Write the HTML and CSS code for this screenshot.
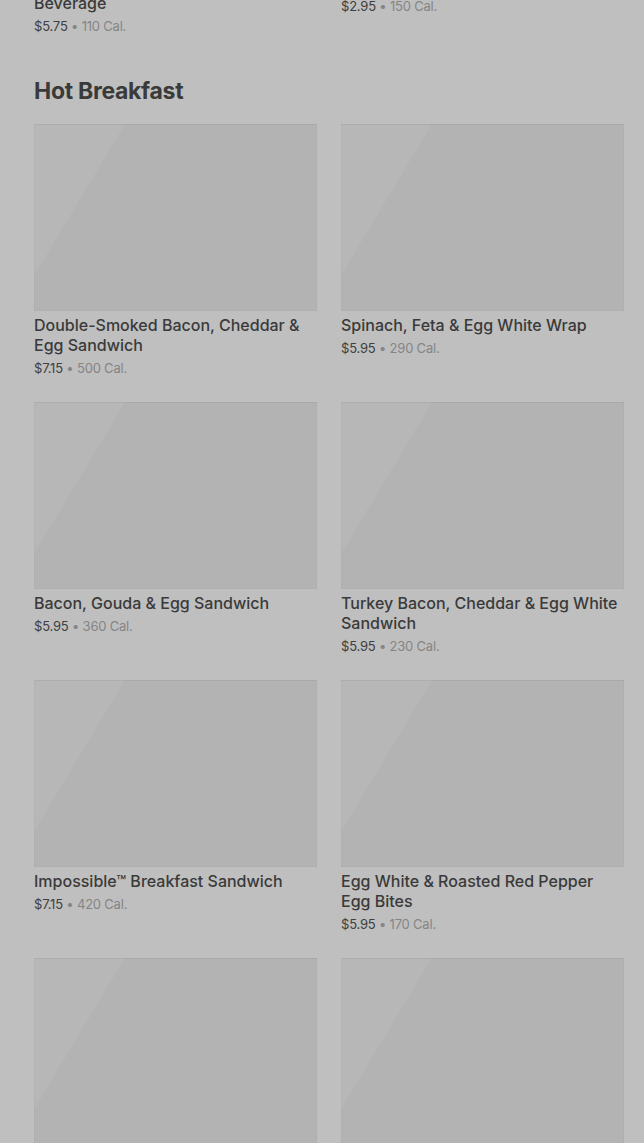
FILE: index.html
```html
<!DOCTYPE html>
<html lang="en">
<head>
<meta charset="utf-8">
<title>Menu</title>
<link rel="stylesheet" href="styles.css">
</head>
<body>
<main class="menu">
  <section class="section section-prev">
    <div class="grid">
      <article class="card">
        <div class="thumb"></div>
        <h3 class="name">Iced Brown Sugar Oatmilk<br>Beverage</h3>
        <p class="meta"><span class="price">$5.75</span> <span class="cal">• 110 Cal.</span></p>
      </article>
      <article class="card">
        <div class="thumb"></div>
        <h3 class="name">Hot Chocolate</h3>
        <p class="meta"><span class="price">$2.95</span> <span class="cal">• 150 Cal.</span></p>
      </article>
    </div>
  </section>

  <section class="section">
    <h2 class="heading">Hot Breakfast</h2>
    <div class="grid">
      <article class="card">
        <div class="thumb"></div>
        <h3 class="name">Double-Smoked Bacon, Cheddar &amp; Egg Sandwich</h3>
        <p class="meta"><span class="price">$7.15</span> <span class="cal">• 500 Cal.</span></p>
      </article>
      <article class="card">
        <div class="thumb"></div>
        <h3 class="name">Spinach, Feta &amp; Egg White Wrap</h3>
        <p class="meta"><span class="price">$5.95</span> <span class="cal">• 290 Cal.</span></p>
      </article>
      <article class="card">
        <div class="thumb"></div>
        <h3 class="name">Bacon, Gouda &amp; Egg Sandwich</h3>
        <p class="meta"><span class="price">$5.95</span> <span class="cal">• 360 Cal.</span></p>
      </article>
      <article class="card">
        <div class="thumb"></div>
        <h3 class="name">Turkey Bacon, Cheddar &amp; Egg White Sandwich</h3>
        <p class="meta"><span class="price">$5.95</span> <span class="cal">• 230 Cal.</span></p>
      </article>
      <article class="card">
        <div class="thumb"></div>
        <h3 class="name">Impossible™ Breakfast Sandwich</h3>
        <p class="meta"><span class="price">$7.15</span> <span class="cal">• 420 Cal.</span></p>
      </article>
      <article class="card">
        <div class="thumb"></div>
        <h3 class="name">Egg White &amp; Roasted Red Pepper Egg Bites</h3>
        <p class="meta"><span class="price">$5.95</span> <span class="cal">• 170 Cal.</span></p>
      </article>
      <article class="card">
        <div class="thumb"></div>
        <h3 class="name">Potato, Cheddar &amp; Chive Bakes</h3>
        <p class="meta"><span class="price">$4.25</span> <span class="cal">• 420 Cal.</span></p>
      </article>
      <article class="card">
        <div class="thumb"></div>
        <h3 class="name">Kale &amp; Mushroom Egg Bites</h3>
        <p class="meta"><span class="price">$5.95</span> <span class="cal">• 230 Cal.</span></p>
      </article>
    </div>
  </section>
</main>
</body>
</html>
```

FILE: styles.css
```css
* {
  box-sizing: border-box;
}

html, body {
  margin: 0;
  padding: 0;
  background: #bfbfbf;
  overflow: hidden;
}

body {
  font-family: Inter, "Noto Sans", "Liberation Sans", sans-serif;
  color: #333;
}

.menu {
  padding: 0 20px 0 34px;
  margin-top: -218px;
}

.section-prev {
  padding-bottom: 39px;
}

.heading {
  margin: 0 0 17px;
  font-size: 23px;
  line-height: 32px;
  font-weight: 700;
  letter-spacing: -0.3px;
  color: #3a3a3a;
}

.grid {
  display: grid;
  grid-template-columns: 283px 283px;
  column-gap: 24px;
  row-gap: 24px;
}

.card {
  display: flex;
  flex-direction: column;
}

.thumb {
  height: 187px;
  background: linear-gradient(121deg, #b7b7b7 0, #b7b7b7 23%, #b3b3b3 23%, #b3b3b3 100%);
  box-shadow: inset 0 1px 0 rgba(0, 0, 0, 0.03), inset 0 0 0 1px rgba(0, 0, 0, 0.02);
}

.name {
  margin: 4px 0 0;
  font-size: 16px;
  line-height: 20px;
  font-weight: 500;
  color: #3a3a3a;
  letter-spacing: 0;
}

.meta {
  margin: 3px 0 0;
  font-size: 13px;
  line-height: 20px;
  letter-spacing: -0.2px;
}

.price {
  color: #404040;
}

.cal {
  color: #858585;
}
```
